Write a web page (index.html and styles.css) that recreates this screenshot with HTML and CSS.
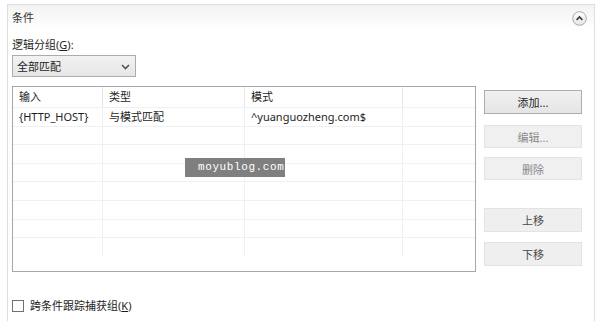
FILE: index.html
```html
<!DOCTYPE html>
<html>
<head>
<meta charset="utf-8">
<link rel="stylesheet" href="styles.css">
</head>
<body>
<div class="panel">
  <div class="panel-header">
    <span class="title">条件</span>
    <span class="collapse">
      <svg width="15" height="15" viewBox="0 0 15 15">
        <defs>
          <linearGradient id="cg" x1="0" y1="0" x2="0" y2="1">
            <stop offset="0" stop-color="#ffffff"/>
            <stop offset="1" stop-color="#e4e4e4"/>
          </linearGradient>
        </defs>
        <circle cx="7.5" cy="7.5" r="6.8" fill="url(#cg)" stroke="#a9a9a9" stroke-width="1"/>
        <path d="M4.6 8.9 L7.5 6 L10.4 8.9" fill="none" stroke="#3a3a3a" stroke-width="1.6"/>
      </svg>
    </span>
  </div>
  <div class="panel-body">
    <div class="field-label">逻辑分组(<u>G</u>):</div>
    <div class="select">
      <span>全部匹配</span>
      <svg class="arrow" width="9" height="6" viewBox="0 0 9 6"><path d="M1 1 L4.5 4.5 L8 1" fill="none" stroke="#555" stroke-width="1.6"/></svg>
    </div>
    <div class="main">
      <div class="list">
        <div class="list-head">
          <div class="c c1">输入</div>
          <div class="c c2">类型</div>
          <div class="c c3">模式</div>
          <div class="c c4"></div>
        </div>
        <div class="row">
          <div class="c c1">{HTTP_HOST}</div>
          <div class="c c2">与模式匹配</div>
          <div class="c c3">^yuanguozheng.com$</div>
          <div class="c c4"></div>
        </div>
        <div class="row"><div class="c c1"></div><div class="c c2"></div><div class="c c3"></div><div class="c c4"></div></div>
        <div class="row"><div class="c c1"></div><div class="c c2"></div><div class="c c3"></div><div class="c c4"></div></div>
        <div class="row"><div class="c c1"></div><div class="c c2"></div><div class="c c3"></div><div class="c c4"></div></div>
        <div class="row"><div class="c c1"></div><div class="c c2"></div><div class="c c3"></div><div class="c c4"></div></div>
        <div class="row"><div class="c c1"></div><div class="c c2"></div><div class="c c3"></div><div class="c c4"></div></div>
        <div class="row"><div class="c c1"></div><div class="c c2"></div><div class="c c3"></div><div class="c c4"></div></div>
        <div class="row"><div class="c c1"></div><div class="c c2"></div><div class="c c3"></div><div class="c c4"></div></div>
        <div class="watermark">moyublog.com</div>
      </div>
      <div class="buttons">
        <button class="btn default">添加...</button>
        <button class="btn disabled b-edit">编辑...</button>
        <button class="btn disabled b-del">删除</button>
        <button class="btn soft b-up">上移</button>
        <button class="btn soft b-down">下移</button>
      </div>
    </div>
    <label class="check">
      <span class="box"></span>
      <span>跨条件跟踪捕获组(<u>K</u>)</span>
    </label>
  </div>
</div>
</body>
</html>
```

FILE: styles.css
```css
* { box-sizing: border-box; }
html, body { margin: 0; padding: 0; background: #ffffff; }
body {
  font-family: "Noto Sans", "Noto Sans CJK SC", sans-serif;
  font-size: 11px;
  color: #1e1e1e;
  overflow: hidden;
  height: 321px;
}
.panel {
  margin: 4px 5px 0 7px;
  border: 1px solid #dedede;
  border-bottom: none;
  height: 330px;
}
.panel-header {
  height: 26px;
  display: flex;
  align-items: center;
  justify-content: space-between;
  padding: 0 7px 0 4px;
  background: linear-gradient(#f3f3f3, #ffffff);
}
.title { color: #333; line-height: 16px; }
.collapse { display: flex; }
.panel-body { padding: 0 4px; }
.field-label { margin-top: 5px; line-height: 18px; color: #1e1e1e; }
.select {
  margin-top: 1px;
  width: 124px;
  height: 22px;
  border: 1px solid #acacac;
  background: linear-gradient(#f2f2f2, #e6e6e6);
  display: flex;
  align-items: center;
  justify-content: space-between;
  padding: 0 5px 0 4px;
}
.arrow { margin-top: 1px; }
.main {
  margin-top: 9px;
  display: flex;
  align-items: flex-start;
  gap: 8px;
}
.list {
  position: relative;
  width: 464px;
  height: 186px;
  border: 1px solid #a3a7ae;
  background: #fff;
}
.list-head, .row { display: flex; }
.list-head { height: 20px; }
.row { height: 18.6px; border-top: 1px solid #f0f0f0; }
.c { padding-left: 6px; white-space: nowrap; }
.list-head .c { border-right: 1px solid #e6e6e6; line-height: 20px; }
.row .c { border-right: 1px solid #f0f0f0; line-height: 17px; }
.c1 { width: 90px; }
.c2 { width: 142px; }
.c3 { width: 158px; }
.c4 { flex: 1; border-right: none !important; }
.watermark {
  position: absolute;
  left: 172px;
  top: 71px;
  width: 100px;
  height: 19px;
  background: #7f7f7f;
  color: #ffffff;
  font-family: "Liberation Mono", monospace;
  font-size: 11px;
  letter-spacing: 0.6px;
  line-height: 19px;
  padding-left: 13px;
}
.buttons {
  display: flex;
  flex-direction: column;
  width: 98px;
  margin-top: 4px;
}
.btn {
  font-family: "Noto Sans", "Noto Sans CJK SC", sans-serif;
  font-size: 11px;
  height: 24px;
  padding: 0;
  border: 1px solid #adadad;
  background: linear-gradient(#f0f0f0, #e5e5e5);
  color: #1e1e1e;
}
.btn.disabled {
  border-color: #e3e3e3;
  background: #f0f0f0;
  color: #8a8a8a;
}
.btn.soft {
  border-color: #e3e3e3;
  background: #efefef;
  color: #4a4a4a;
}
.b-edit { margin-top: 11px; height: 23px; }
.b-del { margin-top: 9px; height: 23px; }
.b-up { margin-top: 28px; }
.b-down { margin-top: 10px; }
.check {
  margin-top: 26px;
  display: flex;
  align-items: center;
  gap: 6px;
  line-height: 16px;
}
.box {
  width: 12px;
  height: 12px;
  border: 1px solid #707070;
  background: #fff;
}
u { text-decoration: underline; text-underline-offset: 1px; }
```
